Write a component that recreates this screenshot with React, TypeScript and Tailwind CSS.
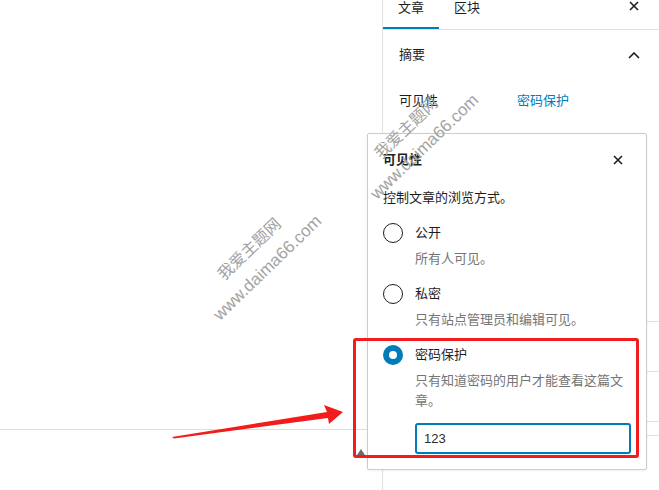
import * as React from "react";

const font = "font-['Liberation_Sans','Noto_Sans_CJK_SC',sans-serif]";

function CloseIcon({ className }: { className?: string }) {
    return (
        <svg viewBox="0 0 10 10" className={className} fill="none" stroke="#1e1e1e" strokeWidth="1.6">
            <path d="M1 1 L9 9 M9 1 L1 9" />
        </svg>
    );
}

function Radio({ checked }: { checked?: boolean }) {
    if (checked) {
        return (
            <span className="w-5 h-5 rounded-full bg-[#007cba] flex items-center justify-center shrink-0">
                <span className="w-[8px] h-[8px] rounded-full bg-white" />
            </span>
        );
    }
    return <span className="w-5 h-5 rounded-full border-[1.5px] border-[#1e1e1e] bg-white shrink-0" />;
}

function Option({ label, desc, checked, children }: { label: string; desc: React.ReactNode; checked?: boolean; children?: React.ReactNode }) {
    return (
        <div className="mt-[15px]">
            <div className="flex items-center gap-3 h-5">
                <Radio checked={checked} />
                <span className="leading-5">{label}</span>
            </div>
            <div className="ml-8 mt-[6px] leading-5 text-[#757575]">{desc}</div>
            {children}
        </div>
    );
}

function Watermark({ x, y }: { x: number; y: number }) {
    return (
        <div
            className="absolute -translate-x-1/2 -translate-y-1/2 -rotate-[44deg] flex flex-col items-center text-[#a3a3a3] pointer-events-none whitespace-nowrap"
            style={{ left: x, top: y }}
        >
            <span className="text-[16px] leading-[27px] font-['Noto_Sans_CJK_SC',sans-serif]">我爱主题网</span>
            <span className="text-[17px] leading-[27px] font-['Liberation_Sans',sans-serif]">www.daima66.com</span>
        </div>
    );
}

export default function App() {
    return (
        <div className={`w-[659px] h-[490px] relative overflow-hidden bg-white flex text-[13px] text-[#1e1e1e] ${font}`}>
            {/* editor canvas */}
            <div className="w-[382px] shrink-0">
                <div className="h-[430px] border-b border-[#dddddd]" />
            </div>

            {/* settings sidebar */}
            <div className="flex-1 border-l border-[#e0e0e0] flex flex-col">
                <div className="h-[30px] border-b border-[#e0e0e0] flex items-start">
                    <div className="h-[29px] px-[15px] border-b-2 border-[#007cba] leading-[16px]">文章</div>
                    <div className="h-[29px] px-[15px] leading-[16px]">区块</div>
                    <CloseIcon className="w-[10px] h-[10px] ml-auto mr-[20px] mt-[1px]" />
                </div>
                <div className="h-[292px] border-b border-[#e0e0e0] px-4">
                    <div className="h-[50px] flex items-center justify-between">
                        <span>摘要</span>
                        <svg viewBox="0 0 12 7" className="w-[12px] h-[7px] mr-[3px]" fill="none" stroke="#1e1e1e" strokeWidth="1.6">
                            <path d="M1 6 L6 1 L11 6" />
                        </svg>
                    </div>
                    <div className="mt-[11px] flex leading-5">
                        <span className="w-[118px]">可见性</span>
                        <span className="text-[#007cba]">密码保护</span>
                    </div>
                </div>
                <div className="h-[50px] border-b border-[#e0e0e0]" />
                <div className="h-[50px] border-b border-[#e0e0e0]" />
                <div className="h-[14px] border-b border-[#e0e0e0]" />
            </div>

            {/* visibility popover */}
            <div className="absolute left-[367px] top-[133px] w-[280px] bg-white border border-[#cccccc] rounded-[2px] shadow-[0_1px_3px_rgba(0,0,0,0.06)] px-[15px] pt-[15px] pb-[15px]">
                <div className="h-[22px] flex items-center justify-between">
                    <span className="font-bold">可见性</span>
                    <CloseIcon className="w-[10px] h-[10px] mr-[8px]" />
                </div>
                <div className="mt-[17px] leading-5">控制文章的浏览方式。</div>
                <Option label="公开" desc="所有人可见。" />
                <Option label="私密" desc="只有站点管理员和编辑可见。" />
                <Option label="密码保护" desc="只有知道密码的用户才能查看这篇文章。" checked>
                    <div className="ml-8 mt-[12px] h-[31px] border-2 border-[#007cba] rounded-[3px] flex items-center px-[7px] text-[13px] text-[#2c2c2c]">
                        123
                    </div>
                </Option>
            </div>

            {/* small handle */}
            <svg className="absolute left-[357px] top-[449px] w-[8px] h-[6px]" viewBox="0 0 8 6">
                <path d="M4 0 L8 6 L0 6 Z" fill="#6b6b6b" />
            </svg>

            {/* annotations */}
            <div className="absolute left-[353px] top-[338px] w-[286px] h-[120px] border-[3px] border-[#f21c1c] rounded-[3px] pointer-events-none" />
            <svg className="absolute left-0 top-0 w-[659px] h-[490px] pointer-events-none" viewBox="0 0 659 490">
                <polygon points="172,437 327,412 324,405 343,412 329,424 328,418 174,438.5" fill="#f21c1c" />
            </svg>

            <Watermark x={258} y={258} />
            <Watermark x={415} y={137} />
        </div>
    );
}
